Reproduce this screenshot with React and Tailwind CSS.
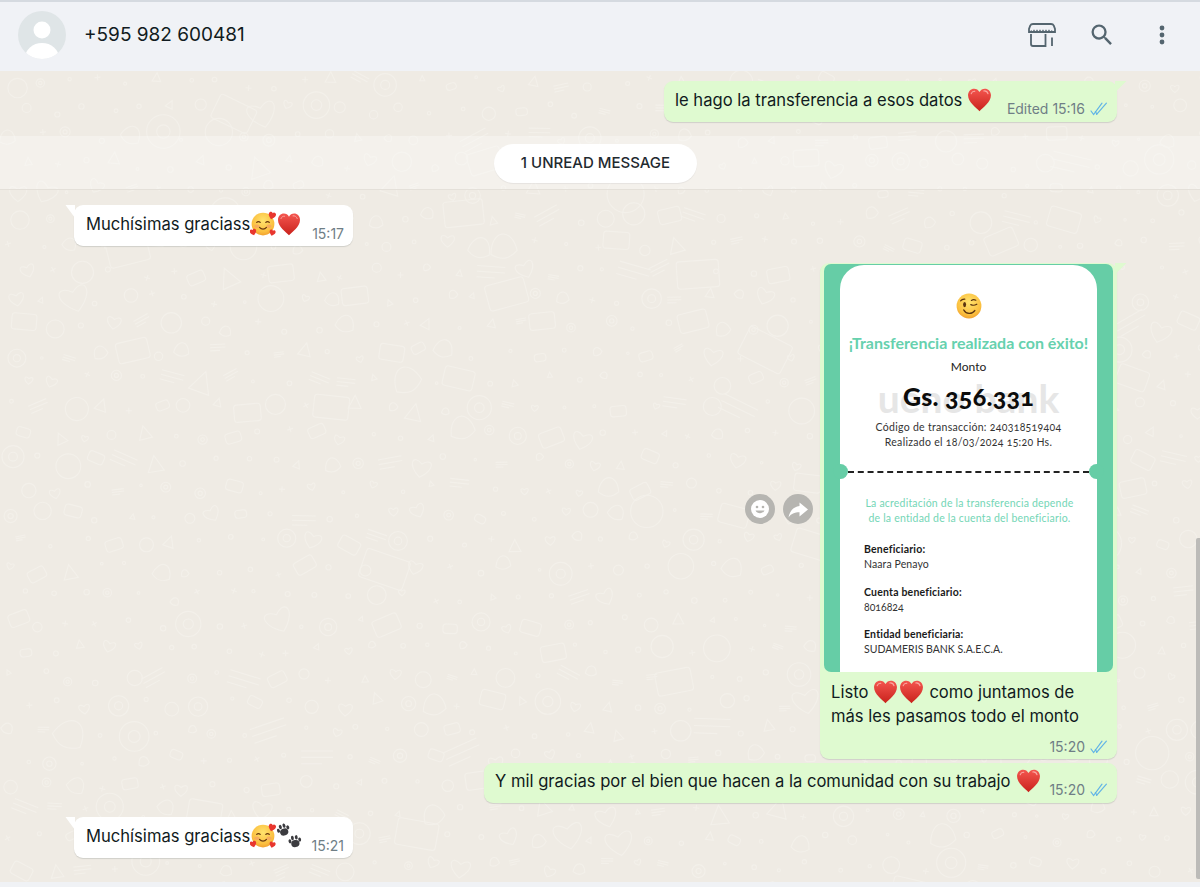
import React from "react";

const Heart = ({ s = 24, className = "" }) => (
  <svg viewBox="0 0 24 24" width={s} height={s} className={`inline-block shrink-0 ${className}`}>
    <defs>
      <linearGradient id="hg" x1="0" y1="0" x2="0" y2="1">
        <stop offset="0" stopColor="#f4564f" />
        <stop offset="1" stopColor="#c9221c" />
      </linearGradient>
    </defs>
    <path d="M12 23.2C9 19.8 1 14.6 1 7.900 1 4.200 3.700 1.600 6.900 1.600c2.200 0 4 1.100 5.100 3.200 1.100-2.100 2.900-3.200 5.100-3.200 3.200 0 5.900 2.600 5.900 6.300 0 6.700-8 11.900-11 15.300z" fill="url(#hg)" />
    <path d="M4 6.500c.6-1.600 2-2.500 3.500-2.300" stroke="#fba5a0" strokeWidth="1" fill="none" strokeLinecap="round" />
    <path d="M16 3.800c1.800-.3 3.600.8 4.200 2.700" stroke="#fba5a0" strokeWidth="1" fill="none" strokeLinecap="round" />
  </svg>
);

const MiniHeart = ({ x, y, s, r = 0 }) => (
  <path
    transform={`translate(${x} ${y}) rotate(${r}) scale(${s})`}
    d="M0 4C-1.400 2.400-4 .9-4-1.600-4-3.200-2.800-4-1.800-4-1-4-.4-3.600 0-2.800.4-3.600 1-4 1.800-4 2.800-4 4-3.200 4-1.600 4 .9 1.400 2.400 0 4z"
    fill="#e8362e"
  />
);

const LoveFace = ({ s = 24 }) => (
  <svg viewBox="0 0 24 24" width={s} height={s} className="inline-block shrink-0">
    <defs>
      <radialGradient id="fg" cx="0.5" cy="0.35" r="0.7">
        <stop offset="0" stopColor="#ffe36e" />
        <stop offset="0.7" stopColor="#fbbf3f" />
        <stop offset="1" stopColor="#f09a2c" />
      </radialGradient>
    </defs>
    <circle cx="12" cy="12" r="10.500" fill="url(#fg)" />
    <ellipse cx="6.500" cy="14" rx="2.400" ry="1.600" fill="#f59a6b" opacity="0.6" />
    <ellipse cx="17.500" cy="14" rx="2.400" ry="1.600" fill="#f59a6b" opacity="0.6" />
    <path d="M6.200 10.600c.9-1.100 2.300-1.100 3.200 0M14.600 10.600c.9-1.100 2.300-1.100 3.200 0" stroke="#6b3a10" strokeWidth="1.100" fill="none" strokeLinecap="round" />
    <path d="M8.800 15.200c1.600 2 4.800 2 6.400 0" stroke="#6b3a10" strokeWidth="1.100" fill="none" strokeLinecap="round" />
    <MiniHeart x={20.3} y={4.4} s={0.85} r={15} />
    <MiniHeart x={3} y={19.6} s={0.75} r={-15} />
    <MiniHeart x={20.6} y={20.2} s={0.7} r={15} />
  </svg>
);

const Wink = () => (
  <svg viewBox="0 0 26 26" width={26} height={26} className="block">
    <defs>
      <radialGradient id="wg" cx="0.5" cy="0.35" r="0.7">
        <stop offset="0" stopColor="#ffe36e" />
        <stop offset="0.7" stopColor="#fbc03f" />
        <stop offset="1" stopColor="#ee9a2c" />
      </radialGradient>
    </defs>
    <circle cx="13" cy="13" r="12.400" fill="url(#wg)" />
    <ellipse cx="8.600" cy="11.600" rx="1.500" ry="2.600" fill="#5b3410" />
    <path d="M14.800 11.600c1.600.8 4 .8 6 -.4M15.400 7.400c1.400-.9 3-.9 4.400-.2M4.600 7.800c1-1.300 2.600-1.900 4.200-1.700" stroke="#5b3410" strokeWidth="1.200" fill="none" strokeLinecap="round" />
    <path d="M7.800 17c2 4.200 8.200 4.600 11 .6" stroke="#5b3410" strokeWidth="1.400" fill="none" strokeLinecap="round" />
  </svg>
);

const Paw = ({ x, y, r }) => (
  <g transform={`translate(${x} ${y}) rotate(${r}) scale(1.3)`} fill="#3b3b3f">
    <ellipse cx="0" cy="1.600" rx="3.200" ry="2.700" />
    <ellipse cx="-3.800" cy="-0.8" rx="1.100" ry="1.600" />
    <ellipse cx="-1.500" cy="-3" rx="1.100" ry="1.700" />
    <ellipse cx="1.500" cy="-3" rx="1.100" ry="1.700" />
    <ellipse cx="3.800" cy="-0.8" rx="1.100" ry="1.600" />
  </g>
);

const Paws = () => (
  <svg viewBox="0 0 26 26" width={26} height={26} className="inline-block shrink-0">
    <Paw x={7.500} y={7} r={-20} />
    <Paw x={19} y={18.500} r={-10} />
  </svg>
);

const Checks = () => (
  <svg viewBox="0 0 19 14" width={19} height={14} className="shrink-0" fill="none" stroke="#62b4e6" strokeWidth="1.200" strokeLinecap="round">
    <path d="M1 9l2.600 3.600L12 1.200" />
    <path d="M6.600 12.400L16.400 1.200" />
    <path d="M5.400 9.600l1.400 2.400" />
  </svg>
);

const Meta = ({ time, edited, check = true }) => (
  <span className="flex items-center gap-[5px] text-[14px] leading-[18px] text-[#6f7e86] whitespace-nowrap">
    {edited ? "Edited " : ""}
    {time}
    {check && <Checks />}
  </span>
);

const TailRight = () => (
  <svg viewBox="0 0 12 12" width={12} height={12} className="absolute -right-[10px] top-0">
    <path d="M0 0h11.500L0 11.500z" fill="#dffad0" />
  </svg>
);
const TailLeft = () => (
  <svg viewBox="0 0 10 14" width={10} height={14} className="absolute -left-[9px] top-0">
    <path d="M10 0H0.500L10 13z" fill="#ffffff" />
  </svg>
);

const shapes = (() => {
  const out = [];
  let seed = 17;
  const rnd = () => {
    seed = (seed * 9301 + 49297) % 233280;
    return seed / 233280;
  };
  for (let y = 6; y < 830; y += 27) {
    for (let x = 4 + ((y / 27) % 2) * 13; x < 1200; x += 29) {
      const px = x + rnd() * 12;
      const py = y + rnd() * 12;
      const k = Math.floor(rnd() * 12);
      const s = 5 + rnd() * rnd() * 20;
      const rot = Math.floor(rnd() * 60) - 30;
      const t = `rotate(${rot} ${px} ${py})`;
      const key = `${x}-${y}`;
      if (k === 0) out.push(<circle key={key} cx={px} cy={py} r={s * 0.8} />);
      else if (k === 1) out.push(<rect key={key} x={px - s} y={py - s * 0.65} width={s * 2} height={s * 1.3} rx={3} transform={t} />);
      else if (k <= 5) out.push(<circle key={key} cx={px} cy={py} r={1.2 + rnd() * 1.6} />);
      else if (k === 6) out.push(<path key={key} transform={t} d={`M${px} ${py + s * 0.7}C${px - s} ${py} ${px - s * 0.7} ${py - s * 0.8} ${px} ${py - s * 0.2}C${px + s * 0.7} ${py - s * 0.8} ${px + s} ${py} ${px} ${py + s * 0.7}z`} />);
      else if (k === 7) out.push(<g key={key}><circle cx={px} cy={py} r={s * 0.75} /><circle cx={px} cy={py} r={s * 0.3} /></g>);
      else if (k === 8) out.push(<path key={key} transform={t} d={`M${px - s} ${py - s * 0.4}h${s * 2}M${px - s} ${py}h${s * 2}M${px - s} ${py + s * 0.4}h${s * 1.3}`} />);
      else if (k === 9) out.push(<path key={key} transform={t} d={`M${px - s * 0.7} ${py + s * 0.3}C${px - s * 0.5} ${py - s} ${px + s * 0.6} ${py - s} ${px + s * 0.7} ${py + s * 0.3}C${px + s * 0.2} ${py + s * 0.7} ${px - s * 0.2} ${py + s * 0.7} ${px - s * 0.7} ${py + s * 0.3}z`} />);
      else if (k === 10) out.push(<path key={key} transform={t} d={`M${px - 3} ${py}h6M${px} ${py - 3}v6`} />);
      else out.push(<path key={key} transform={t} d={`M${px} ${py - s * 0.5}L${px + s * 0.45} ${py + s * 0.4}L${px - s * 0.45} ${py + s * 0.4}z`} />);
    }
  }
  return out;
})();

const Doodles = () => (
  <svg className="absolute inset-0 w-full h-full" fill="none" stroke="#f3f0ea" strokeWidth="1.100">
    {shapes}
  </svg>
);

const Bubble = ({ side, tail, className = "", children }) => (
  <div className={`relative rounded-[9px] shadow-[0_1px_1px_rgba(11,20,26,0.13)] ${side === "r" ? "bg-[#dffad0] self-end" : "bg-white self-start"} ${className}`}>
    {tail && (side === "r" ? <TailRight /> : <TailLeft />)}
    {children}
  </div>
);

const Receipt = () => (
  <div className="relative mx-[4px] mt-[1px] h-[408px] rounded-[7px] bg-[#66cda6] px-[16px] pt-[1px] overflow-hidden font-['Lato',sans-serif]">
    <div className="relative h-full rounded-t-[24px] bg-white">
      <div className="flex h-[206px] flex-col items-center pt-[28px] text-[#222]">
        <Wink />
        <div className="mt-[14px] text-[16px] leading-[20px] font-bold text-[#66d1ae] whitespace-nowrap">¡Transferencia realizada con éxito!</div>
        <div className="mt-[6px] text-[12px] leading-[16px]">Monto</div>
        <div className="relative mt-[4px] h-[34px] w-full text-center">
          <span className="absolute inset-x-0 top-[2px] text-[39px] leading-[34px] font-bold text-[#e6e6e6]">ueno bank</span>
          <span className="relative text-[25px] leading-[34px] font-black text-[#0c0c0c] oldstyle-nums tracking-[0.3px]">Gs. 356.331</span>
        </div>
        <div className="mt-[7px] text-center text-[10.5px] leading-[15px] text-[#333] oldstyle-nums tracking-[0.3px]">
          <div>Código de transacción: 240318519404</div>
          <div>Realizado el 18/03/2024 15:20 Hs.</div>
        </div>
      </div>
      <div className="mx-[8px] border-t-2 border-dashed border-[#222]" />
      <div className="pl-[24px] pr-[22px] pt-[23px] text-[10.5px] leading-[15px] text-[#333]">
        <div className="text-center text-[#74d6b6] tracking-[0.2px] whitespace-nowrap -mx-[4px]">
          <div>La acreditación de la transferencia depende</div>
          <div>de la entidad de la cuenta del beneficiario.</div>
        </div>
        <div className="mt-[16px]">
          <div className="font-bold text-[#1a1a1a] tracking-[0.2px]">Beneficiario:</div>
          <div className="tracking-[0.1px]">Naara Penayo</div>
        </div>
        <div className="mt-[13px]">
          <div className="font-bold text-[#1a1a1a] tracking-[0.2px]">Cuenta beneficiario:</div>
          <div className="oldstyle-nums">8016824</div>
        </div>
        <div className="mt-[12px]">
          <div className="font-bold text-[#1a1a1a] tracking-[0.2px]">Entidad beneficiaria:</div>
          <div>SUDAMERIS BANK S.A.E.C.A.</div>
        </div>
      </div>
      <span className="absolute -left-[7px] top-[199px] h-[15px] w-[15px] rounded-full bg-[#66cda6]" />
      <span className="absolute -right-[7px] top-[199px] h-[15px] w-[15px] rounded-full bg-[#66cda6]" />
    </div>
  </div>
);

const RoundBtn = ({ children }) => (
  <span className="flex h-[30px] w-[30px] items-center justify-center rounded-full bg-[#b6b5b1]">{children}</span>
);

export default function App() {
  return (
    <div className="flex h-[887px] w-[1200px] flex-col overflow-hidden bg-[#efebe4] font-['Inter','Liberation_Sans',sans-serif] text-[#111b21]">
      <header className="flex h-[71px] shrink-0 items-center border-t-2 border-[#d5dae0] bg-[#f0f2f6] pl-[18px] pr-[35px]">
        <svg viewBox="0 0 48 48" width={48} height={48} className="shrink-0 -mt-[3px]">
          <clipPath id="av"><circle cx="24" cy="24" r="24" /></clipPath>
          <circle cx="24" cy="24" r="24" fill="#dfe5e7" />
          <g clipPath="url(#av)" fill="#fff">
            <circle cx="24" cy="19" r="8.500" />
            <ellipse cx="24" cy="47" rx="17" ry="15" />
          </g>
        </svg>
        <div className="ml-[18px] -mt-[3px] text-[19px] leading-[28px]">+595 982 600481</div>
        <div className="ml-auto flex items-center -mt-[3px] text-[#54656f]">
          <svg viewBox="0 0 28 24" width={28} height={24} fill="none" stroke="currentColor" strokeWidth="1.800" className="shrink-0">
            <path d="M5 1h18c1.300 0 2.300.6 2.800 1.600L27 6v3H1V6l1.200-3.400C2.700 1.600 3.700 1 5 1z" />
            <path d="M3 11v10c0 1.100.8 2 2 2h12.500V11M24 14.500V23" />
            <path d="M3 7.500q1.500 2.500 3 0q1.500 2.500 3 0q1.500 2.500 3 0q1.500 2.500 3 0q1.500 2.500 3 0q1.500 2.500 3 0q1.500 2.500 3 0" strokeWidth="1.300" />
          </svg>
          <svg viewBox="0 0 24 24" width={28} height={28} fill="currentColor" className="ml-[32px] shrink-0">
            <path d="M15.500 14h-.79l-.28-.27A6.471 6.471 0 0 0 16 9.500 6.500 6.500 0 1 0 9.500 16c1.610 0 3.090-.59 4.230-1.570l.27.28v.79l5 4.990L20.490 19l-4.990-5zm-6 0C7.010 14 5 11.990 5 9.500S7.010 5 9.500 5 14 7.010 14 9.500 11.990 14 9.500 14z" />
          </svg>
          <svg viewBox="0 0 6 24" width={6} height={24} fill="currentColor" className="ml-[43px] shrink-0">
            <circle cx="3" cy="5" r="2.400" />
            <circle cx="3" cy="12" r="2.400" />
            <circle cx="3" cy="19" r="2.400" />
          </svg>
        </div>
      </header>

      <main className="relative flex flex-1 flex-col pl-[74px] pr-[83px] pt-[10px]">
        <Doodles />
        <Bubble side="r" tail className="flex h-[41px] w-[453px] items-end justify-between pl-[11px] pr-[8px] pb-[4px]">
          <span className="flex items-center gap-[5px] self-start pt-[6px] text-[16.6px] leading-[24px] whitespace-nowrap">
            le hago la transferencia a esos datos <Heart s={25} />
          </span>
          <Meta time="15:16" edited />
        </Bubble>

        <div className="relative -ml-[74px] -mr-[83px] mt-[14px] flex h-[54px] items-center justify-center border-b border-[#e4e0d9] bg-white/30 pr-[9px] pt-[1px]">
          <div className="flex h-[39px] w-[203px] items-center justify-center rounded-full bg-white text-[15px] font-medium text-[#1f2a30] shadow-[0_1px_1px_rgba(11,20,26,0.06)]">
            1 UNREAD MESSAGE
          </div>
        </div>

        <Bubble side="l" tail className="mt-[15px] flex h-[41px] w-[279px] items-end justify-between pl-[12px] pr-[9px] pb-[3px]">
          <span className="flex items-center self-start pt-[6px] text-[16.6px] leading-[24px] whitespace-nowrap">
            Muchísimas graciass<LoveFace s={26} /><Heart s={24} className="ml-[1px]" />
          </span>
          <Meta time="15:17" check={false} />
        </Bubble>

        <div className="relative mt-[17px] self-end">
          <Bubble side="r" tail className="w-[297px] h-[496px] flex flex-col">
            <Receipt />
            <div className="px-[11px] pt-[7px] text-[16.6px] leading-[24px]">
              <div className="flex items-center gap-[5px] whitespace-nowrap">Listo <Heart s={25} /><Heart s={25} className="-ml-[4px]" /> como juntamos de</div>
              <div className="whitespace-nowrap">más les pasamos todo el monto</div>
            </div>
            <div className="mt-auto flex justify-end pb-[3px] pr-[8px]"><Meta time="15:20" /></div>
          </Bubble>
          <div className="absolute -left-[75px] top-[231px] flex gap-[8px]">
            <RoundBtn>
              <svg viewBox="0 0 20 20" width={20} height={20}>
                <circle cx="10" cy="10" r="9" fill="#fff" />
                <circle cx="7" cy="8" r="1.300" fill="#b6b5b1" />
                <circle cx="13" cy="8" r="1.300" fill="#b6b5b1" />
                <path d="M5.500 11.500c1.500 3.500 7.500 3.500 9 0z" fill="#b6b5b1" />
              </svg>
            </RoundBtn>
            <RoundBtn>
              <svg viewBox="0 0 24 24" width={24} height={24}>
                <path d="M13.500 5.500L22 12.500l-8.500 7v-4.200c-5 0-8.500 1.500-11 5.200 1-5.500 4-10.500 11-11.500z" fill="#fff" />
              </svg>
            </RoundBtn>
          </div>
        </div>

        <Bubble side="r" className="mt-[4px] flex h-[40px] w-[633px] items-end justify-between pl-[11px] pr-[8px] pb-[4px]">
          <span className="flex items-center gap-[5px] self-start pt-[5px] text-[16.6px] leading-[24px] whitespace-nowrap">
            Y mil gracias por el bien que hacen a la comunidad con su trabajo <Heart s={25} />
          </span>
          <Meta time="15:20" />
        </Bubble>

        <Bubble side="l" tail className="mt-[14px] flex h-[41px] w-[279px] items-end justify-between pl-[12px] pr-[9px] pb-[3px]">
          <span className="flex items-center self-start pt-[6px] text-[16.6px] leading-[24px] whitespace-nowrap">
            Muchísimas graciass<LoveFace s={26} /><Paws />
          </span>
          <Meta time="15:21" check={false} />
        </Bubble>

        <span className="absolute right-0 top-[467px] bottom-[3px] w-[4px] rounded-l-[2px] bg-[#bcbbb8]" />
      </main>
      <div className="h-[5px] shrink-0 bg-[#f0f2f5]" />
    </div>
  );
}
